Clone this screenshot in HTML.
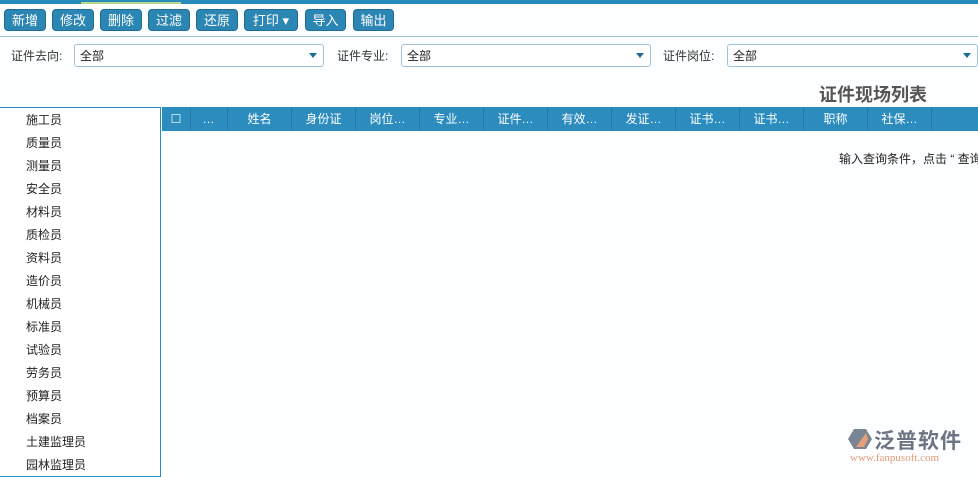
<!DOCTYPE html>
<html><head><meta charset="utf-8"><style>
body{margin:0;width:978px;height:472px;overflow:hidden;background:#fdfeff;font-family:"Liberation Sans","Noto Sans CJK SC",sans-serif;font-size:12px;color:#222;position:relative}
.top{position:absolute;left:0;top:0;width:978px;height:4px;background:#2a8cbc}
.grn{position:absolute;left:81px;top:2px;width:100px;height:2px;background:#b9d88a}
.btn{position:absolute;top:9px;height:22px;background:#2b86b3;border:1px solid #1f6d94;border-radius:4px;color:#fff;font-size:13px;line-height:21px;text-align:center;box-sizing:border-box}
.hl{position:absolute;left:0;top:36px;width:978px;height:1px;background:#9cc5dc}
.lbl{position:absolute;top:47px;font-size:12px;color:#333}
.sel{position:absolute;top:44px;height:23px;border:1px solid #9cc2dc;border-radius:3px;background:#fff;box-sizing:border-box;font-size:12px;line-height:22px;padding-left:5px}
.sel:after{content:"";position:absolute;right:6px;top:8px;border-left:4px solid transparent;border-right:4px solid transparent;border-top:5px solid #1f6d94}
.title{position:absolute;left:819px;top:81px;font-size:18px;font-weight:bold;color:#555}
.left{position:absolute;left:0;top:107px;width:161px;height:370px;border:1px solid #2a8cbc;border-left:none;box-sizing:border-box;background:#fff}
.left div{position:absolute;left:26px;font-size:12px}
.hdr{position:absolute;left:162px;top:107px;width:816px;height:24px;background:#2b8cbd}
.hdr span{position:absolute;top:0;height:24px;line-height:24px;color:#fff;text-align:center;border-right:1px solid #237aa6;font-size:12px}
.msg{position:absolute;left:839px;top:150px;font-size:12px;white-space:nowrap}
</style></head><body>
<div class="top"></div><div class="grn"></div>
<div class="btn" style="left:4px;width:42px">新增</div>
<div class="btn" style="left:52px;width:42px">修改</div>
<div class="btn" style="left:100px;width:42px">删除</div>
<div class="btn" style="left:148px;width:42px">过滤</div>
<div class="btn" style="left:196px;width:42px">还原</div>
<div class="btn" style="left:244px;width:54px">打印 ▾</div>
<div class="btn" style="left:305px;width:41px">导入</div>
<div class="btn" style="left:353px;width:41px">输出</div>
<div class="hl"></div>
<div class="lbl" style="left:11px">证件去向:</div>
<div class="sel" style="left:74px;width:250px">全部</div>
<div class="lbl" style="left:337px">证件专业:</div>
<div class="sel" style="left:401px;width:250px">全部</div>
<div class="lbl" style="left:663px">证件岗位:</div>
<div class="sel" style="left:727px;width:251px">全部</div>
<div class="title">证件现场列表</div>
<div class="left">
<div style="top:3px">施工员</div><div style="top:26px">质量员</div><div style="top:49px">测量员</div><div style="top:72px">安全员</div><div style="top:95px">材料员</div><div style="top:118px">质检员</div><div style="top:141px">资料员</div><div style="top:164px">造价员</div><div style="top:187px">机械员</div><div style="top:210px">标准员</div><div style="top:233px">试验员</div><div style="top:256px">劳务员</div><div style="top:279px">预算员</div><div style="top:302px">档案员</div><div style="top:325px">土建监理员</div><div style="top:348px">园林监理员</div>
</div>
<div class="hdr">
<span style="left:0;width:28px">☐</span>
<span style="left:28px;width:37px">…</span>
<span style="left:66px;width:63px">姓名</span>
<span style="left:130px;width:63px">身份证</span>
<span style="left:194px;width:63px">岗位…</span>
<span style="left:258px;width:63px">专业…</span>
<span style="left:322px;width:63px">证件…</span>
<span style="left:386px;width:63px">有效…</span>
<span style="left:450px;width:63px">发证…</span>
<span style="left:514px;width:63px">证书…</span>
<span style="left:578px;width:63px">证书…</span>
<span style="left:642px;width:63px">职称</span>
<span style="left:706px;width:63px">社保…</span>
</div>
<div class="msg">输入查询条件，点击 “ 查询</div>
<svg style="position:absolute;left:848px;top:427px" width="24" height="24" viewBox="0 0 24 24"><path d="M6 2h12l6 10-6 10H6L0 12z" fill="#7a8594"/><path d="M8 20 L18 6 L20 12 L16 20z" fill="#e8a07a"/></svg>
<div style="position:absolute;left:874px;top:425px;font-size:21px;color:#6c7584;font-weight:bold;letter-spacing:1px">泛普软件</div>
<div style="position:absolute;left:850px;top:452px;font-size:11px;color:#e09a7a;font-family:'Liberation Serif',serif">www.fanpusoft.com</div>
</body></html>
